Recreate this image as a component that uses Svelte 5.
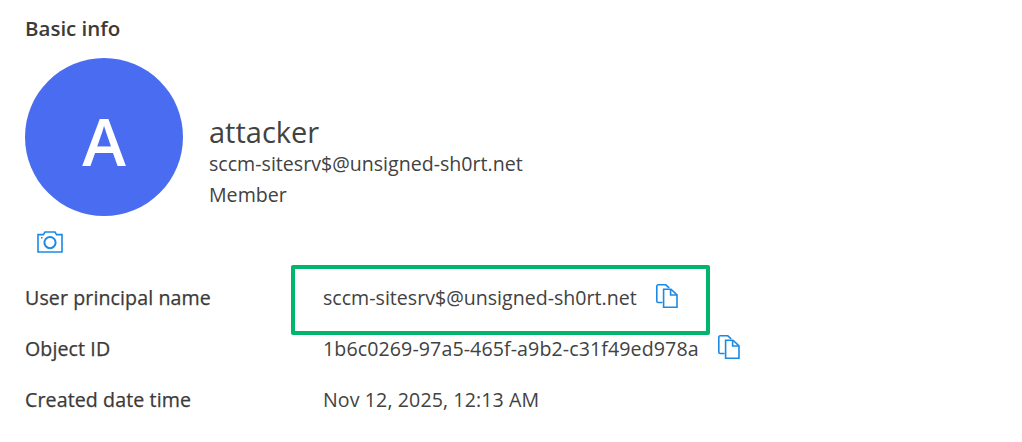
<script>
	const rows = [
		{ label: 'User principal name', value: 'sccm-sitesrv$@unsigned-sh0rt.net', copy: true, boxed: true },
		{ label: 'Object ID', value: '1b6c0269-97a5-465f-a9b2-c31f49ed978a', copy: true },
		{ label: 'Created date time', value: 'Nov 12, 2025, 12:13 AM' }
	];
</script>

{#snippet copyIcon()}
	<svg class="copy" width="24" height="26" viewBox="0 0 24 26" fill="none" stroke="#1b8ae4" stroke-width="1.6">
		<path d="M7.5 19.5H3.2a1.4 1.4 0 0 1-1.4-1.4V3.2a1.4 1.4 0 0 1 1.4-1.4h7.6l3.4 3" />
		<path d="M8.6 6.2h7.4l6 5.6v12.4H8.6z" />
		<path d="M15.6 6.2v5.8h6.4" />
	</svg>
{/snippet}

<main class="panel">
	<h2>Basic info</h2>

	<section class="profile">
		<div class="avatar">A</div>
		<div class="identity">
			<div class="name">attacker</div>
			<div class="mail">sccm-sitesrv$@unsigned-sh0rt.net</div>
			<div class="kind">Member</div>
		</div>
	</section>

	<button class="camera" aria-label="Change photo">
		<svg width="26" height="22" viewBox="0 0 26 22" fill="none" stroke="#1b8ae4" stroke-width="1.6">
			<path d="M1 3.6h5.4l1.6-2.6h10l1.6 2.6H25v17.4H1z" />
			<circle cx="13" cy="11.6" r="5.6" stroke-width="2" />
			<path d="M4 6.8h1.6" />
		</svg>
	</button>

	<dl class="rows">
		{#each rows as row}
			<div class="row">
				<dt>{row.label}</dt>
				<dd class:boxed={row.boxed}>
					<span>{row.value}</span>
					{#if row.copy}{@render copyIcon()}{/if}
				</dd>
			</div>
		{/each}
		<div class="highlight"></div>
	</dl>
</main>

<style>
	:global(body) {
		background: #fff;
	}

	.panel {
		box-sizing: border-box;
		width: 1022px;
		height: 442px;
		padding: 16px 0 0 25px;
		font-family: "Open Sans", "Noto Sans", sans-serif;
		color: #424242;
		overflow: hidden;
	}

	h2 {
		margin: 0;
		font-size: 20.5px;
		line-height: 24px;
		font-weight: 600;
		color: #3b3a39;
	}

	.profile {
		display: flex;
		align-items: center;
		margin-top: 18px;
	}

	.avatar {
		width: 158px;
		height: 158px;
		border-radius: 50%;
		background: #4a6cf0;
		color: #fff;
		font-size: 66px;
		font-weight: 600;
		line-height: 164px;
		text-align: center;
	}

	.identity {
		margin: 48px 0 0 26px;
	}

	.name {
		font-size: 29px;
		line-height: 32px;
	}

	.mail {
		font-size: 19.6px;
		line-height: 24px;
		margin-top: 4px;
	}

	.kind {
		font-size: 19.6px;
		line-height: 24px;
		margin-top: 7px;
	}

	.camera {
		display: block;
		margin: 15px 0 0 12px;
		padding: 0;
		border: 0;
		background: none;
		height: 22px;
	}

	.rows {
		position: relative;
		margin: 19px 0 0;
	}

	.row {
		display: flex;
		align-items: center;
		height: 51px;
		font-size: 19.6px;
	}

	dt {
		width: 298px;
		font-weight: 500;
		color: #3b3a39;
		-webkit-text-stroke: 0.25px #3b3a39;
		letter-spacing: 0.1px;
	}

	dd {
		display: flex;
		align-items: center;
		margin: 0;
		letter-spacing: 0.1px;
	}

	dd.boxed {
		letter-spacing: 0;
	}

	.copy {
		margin: -4px 0 0 18px;
	}

	.highlight {
		position: absolute;
		left: 266px;
		top: -7px;
		width: 411px;
		height: 62px;
		border: 4px solid #00b56c;
		border-radius: 2px;
	}
</style>
